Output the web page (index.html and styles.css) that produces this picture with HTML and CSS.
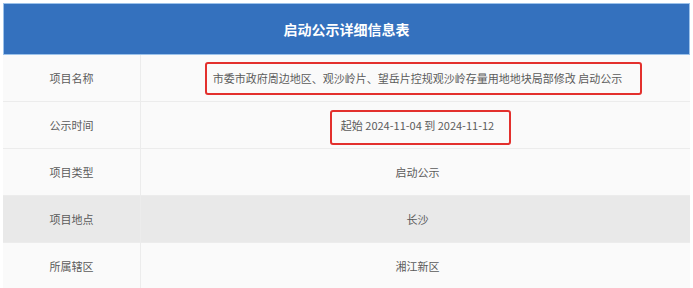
FILE: index.html
```html
<!DOCTYPE html>
<html lang="zh">
<head>
<meta charset="utf-8">
<link rel="stylesheet" href="styles.css">
</head>
<body>
<div class="page">
  <div class="sheet">
    <div class="title">启动公示详细信息表</div>
    <div class="row">
      <div class="label">项目名称</div>
      <div class="value">市委市政府周边地区、观沙岭片、望岳片控规观沙岭存量用地地块局部修改 启动公示</div>
    </div>
    <div class="row">
      <div class="label">公示时间</div>
      <div class="value">起始 2024-11-04 到 2024-11-12</div>
    </div>
    <div class="row">
      <div class="label">项目类型</div>
      <div class="value">启动公示</div>
    </div>
    <div class="row row-alt">
      <div class="label">项目地点</div>
      <div class="value">长沙</div>
    </div>
    <div class="row">
      <div class="label">所属辖区</div>
      <div class="value">湘江新区</div>
    </div>
  </div>
  <div class="mark mark-name"></div>
  <div class="mark mark-time"></div>
</div>
</body>
</html>
```

FILE: styles.css
```css
* { box-sizing: border-box; }
html, body { margin: 0; padding: 0; background: #ffffff; }
body {
  font-family: "Noto Sans CJK SC", "Liberation Sans", Arial, sans-serif;
  color: #5a5a5a;
  overflow: hidden;
}
.page {
  position: relative;
  width: 693px;
  height: 288px;
  padding: 3px 3px 0 3px;
}
.sheet {
  display: flex;
  flex-direction: column;
}
.title {
  height: 52px;
  background: #3471be;
  border: 1px solid #9cc2ea;
  color: #ffffff;
  font-weight: bold;
  font-size: 14px;
  display: flex;
  align-items: center;
  justify-content: center;
}
.row {
  display: grid;
  grid-template-columns: 138px 1fr;
  height: 47px;
  background: #fafafa;
  border-bottom: 1px solid #ececec;
  font-size: 11px;
}
.row-alt { background: #e9e9e9; }
.label, .value {
  display: flex;
  align-items: center;
  justify-content: center;
}
.value { padding-left: 4px; }
.label { border-right: 1px solid #ececec; }
.mark {
  position: absolute;
  border: 2px solid #e3302d;
  border-radius: 3px;
}
.mark-name { left: 205px; top: 62px; width: 437px; height: 33px; }
.mark-time { left: 330px; top: 110px; width: 181px; height: 35px; }
```
